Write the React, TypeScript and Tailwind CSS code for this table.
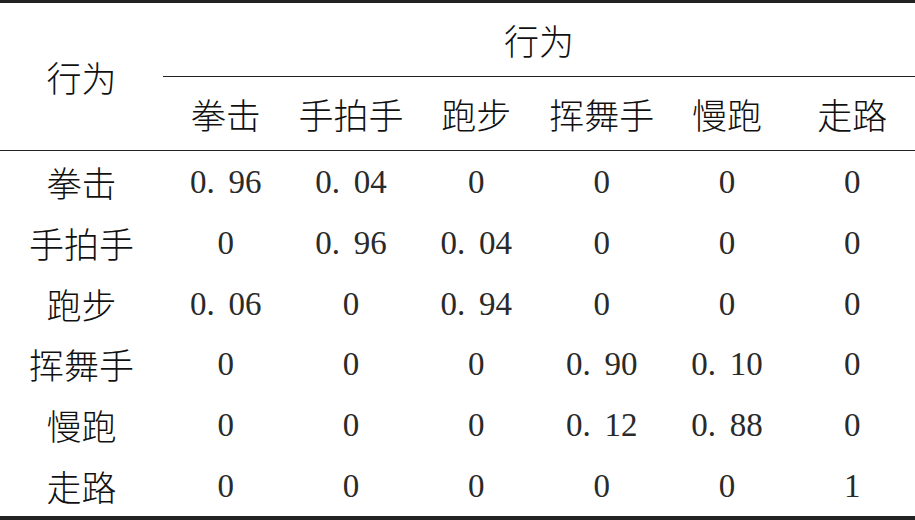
const cols = ['拳击', '手拍手', '跑步', '挥舞手', '慢跑', '走路']

const rows: { label: string; values: string[] }[] = [
  { label: '拳击', values: ['0.96', '0.04', '0', '0', '0', '0'] },
  { label: '手拍手', values: ['0', '0.96', '0.04', '0', '0', '0'] },
  { label: '跑步', values: ['0.06', '0', '0.94', '0', '0', '0'] },
  { label: '挥舞手', values: ['0', '0', '0', '0.90', '0.10', '0'] },
  { label: '慢跑', values: ['0', '0', '0', '0.12', '0.88', '0'] },
  { label: '走路', values: ['0', '0', '0', '0', '0', '1'] },
]

const cjk = "font-['Noto_Sans_CJK_SC',sans-serif] font-light"

// numbers are drawn monospace-like: the dot gets a full digit cell
function Num({ v }: { v: string }) {
  const [a, b] = v.split('.')
  return (
    <span className="font-['Liberation_Serif',serif] text-[33px] leading-none text-[#2a2a2a] pt-[2px]">
      {a}
      {b !== undefined && (
        <>
          <span className="inline-block w-[22px]">.</span>
          {b}
        </>
      )}
    </span>
  )
}

export default function App() {
  return (
    <div className="w-[915px] h-[520px] bg-white flex flex-col border-t-[3px] border-b-[4px] border-[#222] text-[#111]">
      {/* Header */}
      <div className="grid grid-cols-[163px_repeat(6,1fr)] grid-rows-[74px_73px] border-b-[1.5px] border-[#222]">
        <div className={`row-span-2 flex items-center justify-center text-[35px] leading-none ${cjk}`}>
          行为
        </div>
        <div className={`col-span-6 flex items-center justify-center border-b-[1.5px] border-[#222] text-[35px] leading-none ${cjk}`}>
          行为
        </div>
        {cols.map((c) => (
          <div key={c} className={`flex items-center justify-center text-[35px] leading-none ${cjk}`}>
            {c}
          </div>
        ))}
      </div>

      {/* Body */}
      <div className="flex-1 flex flex-col">
        {rows.map((r) => (
          <div key={r.label} className="flex-1 grid grid-cols-[163px_repeat(6,1fr)]">
            <div className={`flex items-center justify-center text-[35px] leading-none ${cjk}`}>
              {r.label}
            </div>
            {r.values.map((v, i) => (
              <div key={i} className="flex items-center justify-center">
                <Num v={v} />
              </div>
            ))}
          </div>
        ))}
      </div>
    </div>
  )
}
